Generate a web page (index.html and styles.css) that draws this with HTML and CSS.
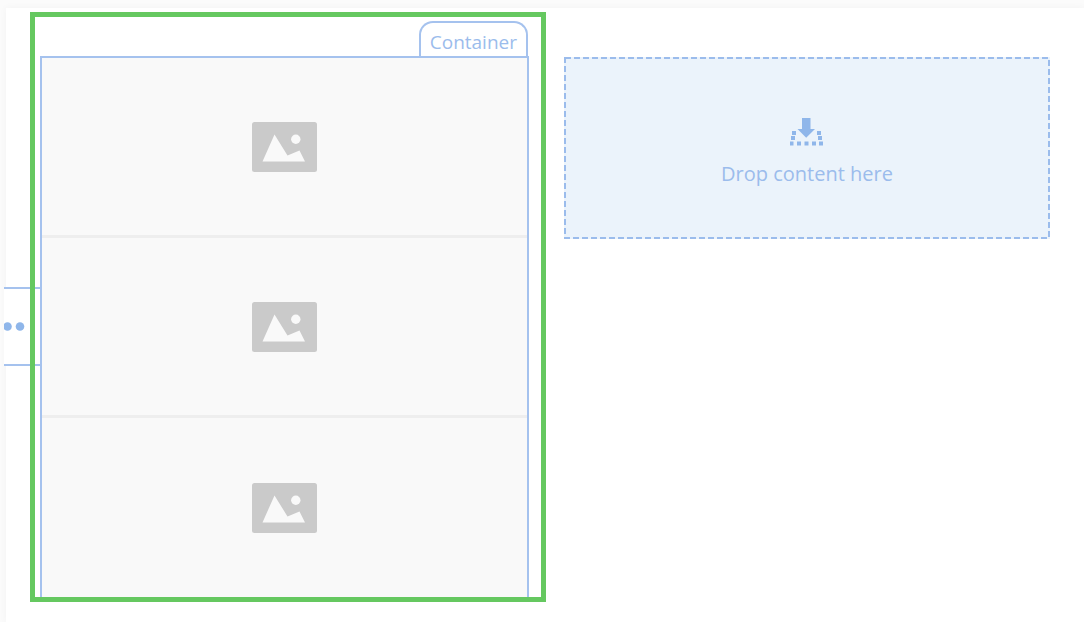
FILE: index.html
```html
<!DOCTYPE html>
<html lang="en">
<head>
<meta charset="utf-8">
<title>Page editor</title>
<link rel="stylesheet" href="styles.css">
</head>
<body>
<svg class="symbols" aria-hidden="true">
  <symbol id="picture" viewBox="0 0 65 50">
    <rect width="65" height="50" rx="2.5" fill="#cacaca"/>
    <path d="M10.500 39.500 22.500 12.500 35.500 33.500 47.500 28.500 53 39.500Z" fill="#f9f9f9"/>
    <circle cx="43.800" cy="17.300" r="4.700" fill="#f9f9f9"/>
  </symbol>
</svg>
<main class="canvas">
  <button class="handle" type="button" aria-label="More options">
    <svg width="24" height="12" viewBox="0 0 24 12" fill="#8fb6ea"><circle cx="3.500" cy="5.500" r="4.300"/><circle cx="16" cy="5.500" r="4.300"/></svg>
  </button>
  <section class="selection">
    <div class="tab">Container</div>
    <div class="container">
      <div class="cell"><svg class="picture" role="img" aria-label="Image"><use href="#picture"/></svg></div>
      <div class="cell"><svg class="picture" role="img" aria-label="Image"><use href="#picture"/></svg></div>
      <div class="cell"><svg class="picture" role="img" aria-label="Image"><use href="#picture"/></svg></div>
    </div>
  </section>
  <section class="drop">
    <svg class="outline" aria-hidden="true"><rect class="dashes" x="1" y="1"/></svg>
    <svg width="34" height="28" viewBox="0 0 34 28" fill="#8fb6ea" aria-hidden="true">
      <path d="M12 0h8.500v11H25l-8.800 8.800L7.500 11H12z"/>
      <path d="M2 13h4v4H2zM1 18h4v4H1zM27 13h4v4h-4zM28 18h4v4h-4zM0 23.500h3.500v4H0zM7 23.500h4v4H7zM14.500 23.500h4v4h-4zM22 23.500h4v4h-4zM29 23.500h4v4h-4z"/>
    </svg>
    <p class="drop-text">Drop content here</p>
  </section>
</main>
</body>
</html>
```
FILE: styles.css
```css
* {
  box-sizing: border-box;
}

body {
  margin: 0;
  padding: 8px 0 0 6px;
  background: #fbfbfb;
  color: #9bbcec;
  font-family: "Open Sans", "Noto Sans", sans-serif;
  font-size: 20px;
  line-height: 28px;
}

.symbols {
  position: absolute;
  width: 0;
  height: 0;
}

.canvas {
  position: relative;
  display: grid;
  grid-template-columns: 516fr 486fr;
  gap: 18px;
  align-items: start;
  min-height: calc(100vh - 8px);
  padding: 4px 34px 20px 24px;
  background: #fff;
  box-shadow: 0 0 8px rgb(0 0 0 / 4%);
}

.handle {
  position: absolute;
  top: 279px;
  left: -2px;
  display: flex;
  align-items: center;
  width: 37px;
  height: 79px;
  padding: 0;
  border: solid #a5c2ee;
  border-width: 2px 0;
  background: #fff;
}

.selection {
  z-index: 1;
  display: flex;
  flex-direction: column;
  padding: 4px 12px 0 5px;
  border: 5px solid #65c860;
}

.tab {
  align-self: flex-end;
  height: 35px;
  margin-right: 1px;
  padding: 5px 9px 0;
  border: 2px solid #a5c2ee;
  border-bottom: 0;
  border-radius: 14px 14px 0 0;
  font-size: 19px;
}

.container {
  display: grid;
  gap: 3px;
  border: 2px solid #a5c2ee;
  border-bottom: 0;
  background: #eee;
}

.cell {
  display: flex;
  align-items: center;
  justify-content: center;
  height: 177px;
  background: #f9f9f9;
}

.cell:last-child {
  height: 179px;
}

.picture {
  width: 65px;
  height: 50px;
}

.drop {
  position: relative;
  display: flex;
  flex-direction: column;
  align-items: center;
  justify-content: center;
  gap: 14px;
  height: 182px;
  margin-top: 45px;
  padding-top: 10px;
  background: #ebf3fb;
}

.outline {
  position: absolute;
  inset: 0;
  width: 100%;
  height: 100%;
}

.dashes {
  width: calc(100% - 2px);
  height: calc(100% - 2px);
  fill: none;
  stroke: #9bbcec;
  stroke-width: 2px;
  stroke-dasharray: 6px 3px;
}

.drop-text {
  margin: 0;
}
```
